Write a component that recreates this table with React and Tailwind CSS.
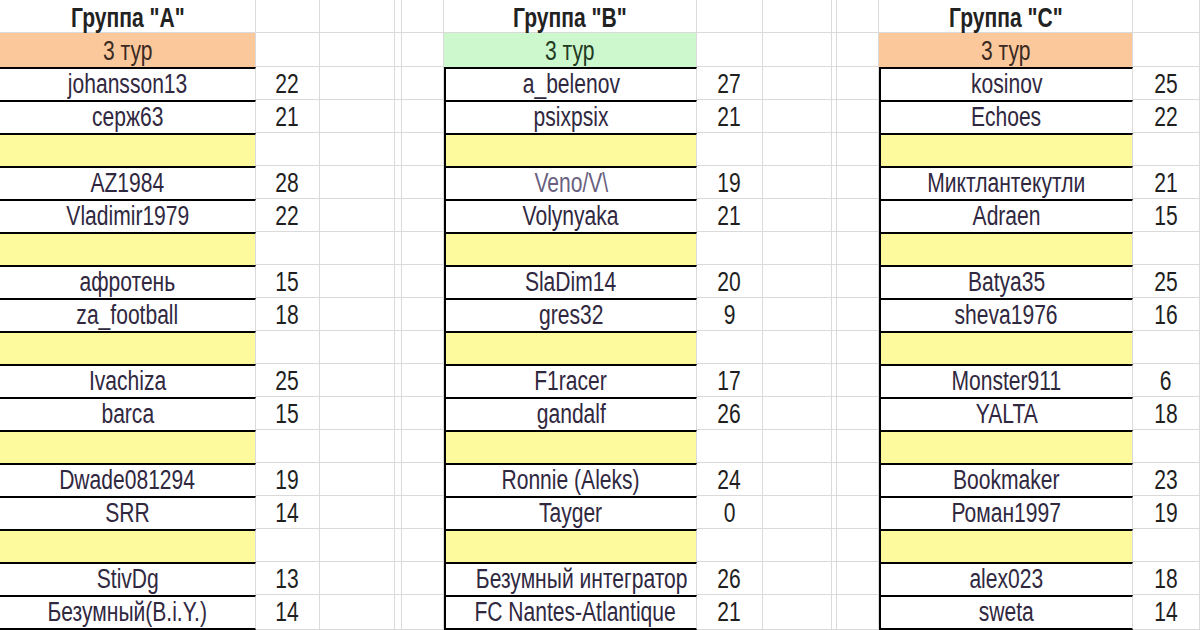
import React from "react";

const Y = null;
const groups = [
  {
    title: 'Группа "A"',
    tourBg: "bg-[#fbc89c]",
    tourText: "text-[#3a2a22]",
    left: false,
    rows: [
      ["johansson13", "22"], ["серж63", "21"], Y,
      ["AZ1984", "28"], ["Vladimir1979", "22"], Y,
      ["афротень", "15"], ["za_football", "18"], Y,
      ["Ivachiza", "25"], ["barca", "15"], Y,
      ["Dwade081294", "19"], ["SRR", "14"], Y,
      ["StivDg", "13"], ["Безумный(B.i.Y.)", "14"],
    ],
  },
  {
    title: 'Группа "B"',
    tourBg: "bg-[#cdf8cd]",
    tourText: "text-[#223a22]",
    left: true,
    rows: [
      ["a_belenov", "27"], ["psixpsix", "21"], Y,
      ["Veno/V\\", "19", true], ["Volynyaka", "21"], Y,
      ["SlaDim14", "20"], ["gres32", "9"], Y,
      ["F1racer", "17"], ["gandalf", "26"], Y,
      ["Ronnie (Aleks)", "24"], ["Tayger", "0"], Y,
      ["Безумный интегратор", "26"], ["FC Nantes-Atlantique", "21"],
    ],
  },
  {
    title: 'Группа "C"',
    tourBg: "bg-[#fbc89c]",
    tourText: "text-[#3a2a22]",
    left: true,
    rows: [
      ["kosinov", "25"], ["Echoes", "22"], Y,
      ["Миктлантекутли", "21"], ["Adraen", "15"], Y,
      ["Batya35", "25"], ["sheva1976", "16"], Y,
      ["Monster911", "6"], ["YALTA", "18"], Y,
      ["Bookmaker", "23"], ["Роман1997", "19"], Y,
      ["alex023", "18"], ["sweta", "14"],
    ],
  },
];

function T({ children, bold }) {
  return (
    <span
      className={
        "inline-block whitespace-nowrap scale-x-[0.78] " + (bold ? "font-bold" : "")
      }
    >
      {children}
    </span>
  );
}

const G = "border-r border-b border-[#dadada]";

export default function App() {
  const cells = [];
  for (let r = 0; r < 19; r++) {
    groups.forEach((g, gi) => {
      const key = `${r}-${gi}`;
      if (r === 0) {
        cells.push(
          <div key={key + "n"} className={G + " text-center text-[#222] pt-[3px] leading-[30px]"}>
            <T bold>{g.title}</T>
          </div>
        );
        cells.push(<div key={key + "s"} className={G} />);
      } else if (r === 1) {
        cells.push(
          <div
            key={key + "n"}
            className={
              "border-r border-[#dadada] text-center pt-[3px] leading-[30px] " +
              g.tourBg +
              " " +
              g.tourText
            }
          >
            <T>3 тур</T>
          </div>
        );
        cells.push(<div key={key + "s"} className={G} />);
      } else {
        const d = g.rows[r - 2];
        const last = r === 18;
        cells.push(
          <div
            key={key + "n"}
            className={
              "border-t-2 border-t-black border-r border-r-[#dadada] text-center leading-[30px] " +
              (g.left ? "border-l-2 border-l-black " : "") +
              (last ? "border-b-2 border-b-black " : "") +
              (d ? "bg-white " : "bg-[#fdfa9e] ") +
              (d && d[2] ? "text-[#6a5f80]" : "text-[#30283f]")
            }
          >
            {d ? <T>{d[0]}</T> : null}
          </div>
        );
        cells.push(
          <div
            key={key + "s"}
            className={G + " text-center text-[#1f1f1f] pt-[2px] leading-[30px]"}
          >
            {d ? <T>{d[1]}</T> : null}
          </div>
        );
      }
      if (gi < 2) {
        cells.push(<div key={key + "a"} className={G} />);
        cells.push(<div key={key + "b"} className={G} />);
        cells.push(<div key={key + "c"} className={G} />);
      }
    });
  }
  return (
    <div className="w-[1200px] h-[630px] overflow-hidden bg-white font-[family-name:Liberation_Sans,Arial,sans-serif] text-[27px]">
      <div className="grid grid-cols-[256px_64px_75px_7px_42px_253px_66px_69px_5px_42px_254px_67px] grid-rows-[33px_34px_repeat(16,33px)_35px]">
        {cells}
      </div>
    </div>
  );
}
